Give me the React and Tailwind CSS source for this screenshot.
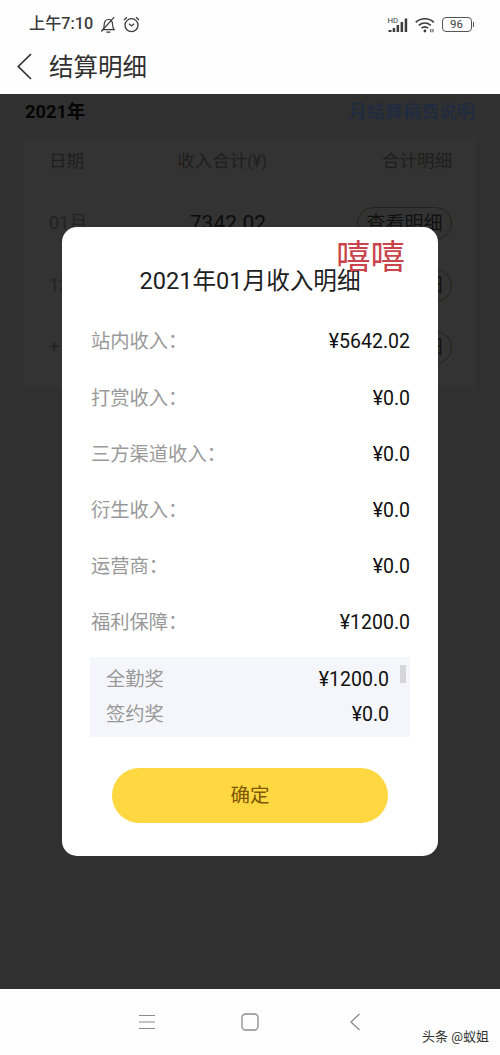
import React from "react";

const incomes = [
  { label: "站内收入：", value: "¥5642.02" },
  { label: "打赏收入：", value: "¥0.0" },
  { label: "三方渠道收入：", value: "¥0.0" },
  { label: "衍生收入：", value: "¥0.0" },
  { label: "运营商：", value: "¥0.0" },
  { label: "福利保障：", value: "¥1200.0" },
];

const bonuses = [
  { label: "全勤奖", value: "¥1200.0" },
  { label: "签约奖", value: "¥0.0" },
];

const months = [
  { date: "01月", total: "7342.02" },
  { date: "12月", total: "" },
  { date: "+", total: "" },
];

const StatusBar = () => (
  <div className="flex h-[46px] items-center pt-[3px] pr-[26px] pl-[29px] text-[#3c3c3c]">
    <span className="w-[64px] text-[16.2px] leading-none font-medium whitespace-nowrap">
      上午7:10
    </span>
    <svg className="ml-[7px] h-[18px] w-[16px]" viewBox="0 0 16 18" fill="none" stroke="currentColor" strokeWidth="1.2">
      <path d="M3 13.7c1.2-1.4 1.2-2.8 1.2-5C4.2 5.4 5.9 3.5 8.4 3.5s4.2 1.9 4.2 5.2c0 2.2.2 3.6 1.6 5z" />
      <path d="M6.4 16.2h4M14.2 1.2 1.2 15.5" />
    </svg>
    <svg className="ml-[7px] h-[18px] w-[17px]" viewBox="0 0 17 18" fill="none" stroke="currentColor" strokeWidth="1.3">
      <circle cx="8.5" cy="9.2" r="6.5" />
      <path d="M6 7.8l2.6 2.2 2.5-2.2M1 4.1l3-2.8M16 4.1l-3-2.8" />
    </svg>

    <svg className="ml-auto h-[18px] w-[21px] overflow-visible" viewBox="0 0 21 18" fill="currentColor">
      <text x="-0.5" y="6.5" fontSize="7.8" fontWeight="400" fontFamily="Roboto">HD</text>
      <path d="M.5 14h3v2h-3zM4.7 12h2.5v4H4.7zM8.6 9h2.5v7H8.6zM12.6 6h2.5v10h-2.5zM16.7 2.5h2.5V16h-2.5z" />
    </svg>
    <svg className="ml-[6px] h-[18px] w-[20px]" viewBox="0 0 20 18" fill="none" stroke="currentColor" strokeWidth="1.6">
      <path d="M.8 6.3c5.2-4.7 12.8-4.7 18 0M3.8 9.4c3.6-3 8.4-3 12 0M6.5 12.2c2-1.6 4.6-1.6 6.6 0" />
      <circle cx="9.9" cy="15" r="1.4" fill="currentColor" stroke="none" />
      <path d="M15.8 13v3.3M18 13v3.3" strokeWidth="1" />
    </svg>
    <div className="ml-[7px] flex h-[15px] w-[30px] items-center justify-center rounded-[4px] border-[1.5px] border-[#555] text-[11.5px] leading-none">
      96
    </div>
    <div className="ml-px h-[5px] w-[1.5px] bg-[#555]" />
  </div>
);

const Header = () => (
  <div className="flex h-[48px] items-center pb-[4px] pl-[17px] text-[#303030]">
    <svg className="mt-[-4px] h-[27px] w-[15px]" viewBox="0 0 15 27" fill="none" stroke="currentColor" strokeWidth="1.7">
      <path d="M14 1 1.3 13.5 14 26" />
    </svg>
    <h1 className="ml-[17px] text-[24.5px] leading-none whitespace-nowrap">结算明细</h1>
  </div>
);

const Settlements = () => (
  <div className="px-[24px] pt-[6px]">
    <div className="flex h-[24px] items-center justify-between px-px leading-none">
      <span className="text-[18.3px] font-bold text-[#050505]">2021年</span>
      <span className="text-[18px] text-[#1c2a45]">月结算稿费说明</span>
    </div>
    <div className="mt-[14px] h-[250px] bg-[#333333] pr-[24px] pl-[25px] text-[#1e1e1e]">
      <div className="flex h-[46px] items-center pt-[2px] text-[17.5px] leading-none">
        <span className="w-[86px]">日期</span>
        <span className="w-[174px] text-center">
          收入合计<span className="text-[16px]">(¥)</span>
        </span>
        <span className="ml-auto">合计明细</span>
      </div>
      <div className="pt-[8px]">
        {months.map((month) => (
          <div key={month.date} className="flex h-[62px] items-center leading-none">
            <span className="w-[91px] text-[18px] text-[#222]">{month.date}</span>
            <span className="w-[176px] text-center text-[21px] text-[#0c0c0c]">{month.total}</span>
            <span className="ml-auto flex h-[33px] w-[95px] items-center justify-center rounded-full border border-[#24211b] text-[19px] whitespace-nowrap text-[#101010]">
              查看明细
            </span>
          </div>
        ))}
      </div>
    </div>
  </div>
);

const IncomeDialog = () => (
  <div className="absolute top-[133px] left-[62px] flex h-[629px] w-[376px] flex-col rounded-[15px] bg-white px-[28px] pt-[37px]">
    <h2 className="flex h-[36px] items-center justify-center text-[23.6px] leading-none whitespace-nowrap text-[#202020]">
      2021年01月收入明细
    </h2>
    <span className="absolute top-[10px] left-[274px] text-[34.5px] leading-[40px] text-[#c9444a]">
      嘻嘻
    </span>
    <div className="mt-[14px]">
      {incomes.map((item) => (
        <div key={item.label} className="flex h-[56.2px] items-center justify-between text-[19.5px] leading-none">
          <span className="pl-px text-[19.3px] text-[#999]">{item.label}</span>
          <span className="text-[#111]">{item.value}</span>
        </div>
      ))}
    </div>
    <div className="relative mt-[6px] h-[80px] bg-[#f4f6fb] pt-[5px] pr-[21px] pl-[16px]">
      {bonuses.map((item) => (
        <div key={item.label} className="flex h-[35px] items-center justify-between text-[19.5px] leading-none">
          <span className="text-[19.3px] text-[#999]">{item.label}</span>
          <span className="text-[#111]">{item.value}</span>
        </div>
      ))}
      <div className="absolute top-[8px] right-[4px] h-[18px] w-[6px] bg-[#d6d6d8]" />
    </div>
    <button className="mx-auto mt-[31px] h-[55px] w-[276px] rounded-full bg-[#ffd740] text-[19.5px] leading-none text-[#7d5600]">
      确定
    </button>
  </div>
);

const NavBar = () => (
  <div className="relative flex h-[66px] items-center justify-center bg-[#fefefe] pr-[2px] text-[#8a8a8a]">
    <svg className="h-[18px] w-[18px]" viewBox="0 0 18 18" fill="none" stroke="currentColor" strokeWidth="1.2">
      <path d="M1 2.5h16M1 9h16M1 15.5h16" />
    </svg>
    <svg className="ml-[85px] h-[18px] w-[18px]" viewBox="0 0 18 18" fill="none" stroke="currentColor" strokeWidth="1.3">
      <rect x="1" y="1" width="16" height="16" rx="3.5" />
    </svg>
    <svg className="ml-[90px] h-[18px] w-[12px]" viewBox="0 0 12 18" fill="none" stroke="currentColor" strokeWidth="1.3">
      <path d="M10.5 1 2 9l8.5 8" />
    </svg>
    <span className="absolute right-[11px] bottom-[12px] text-[13px] leading-none whitespace-nowrap text-[#333]">
      头条 @蚁姐
    </span>
  </div>
);

const App = () => {
  return (
    <div className="flex h-[1055px] w-[500px] flex-col overflow-hidden bg-[#fefefe] font-['Roboto','Noto_Sans_CJK_SC',sans-serif]">
      <StatusBar />
      <Header />
      <main className="relative h-[895px] bg-[#303030]">
        <Settlements />
        <IncomeDialog />
      </main>
      <NavBar />
    </div>
  );
};

export default App;
